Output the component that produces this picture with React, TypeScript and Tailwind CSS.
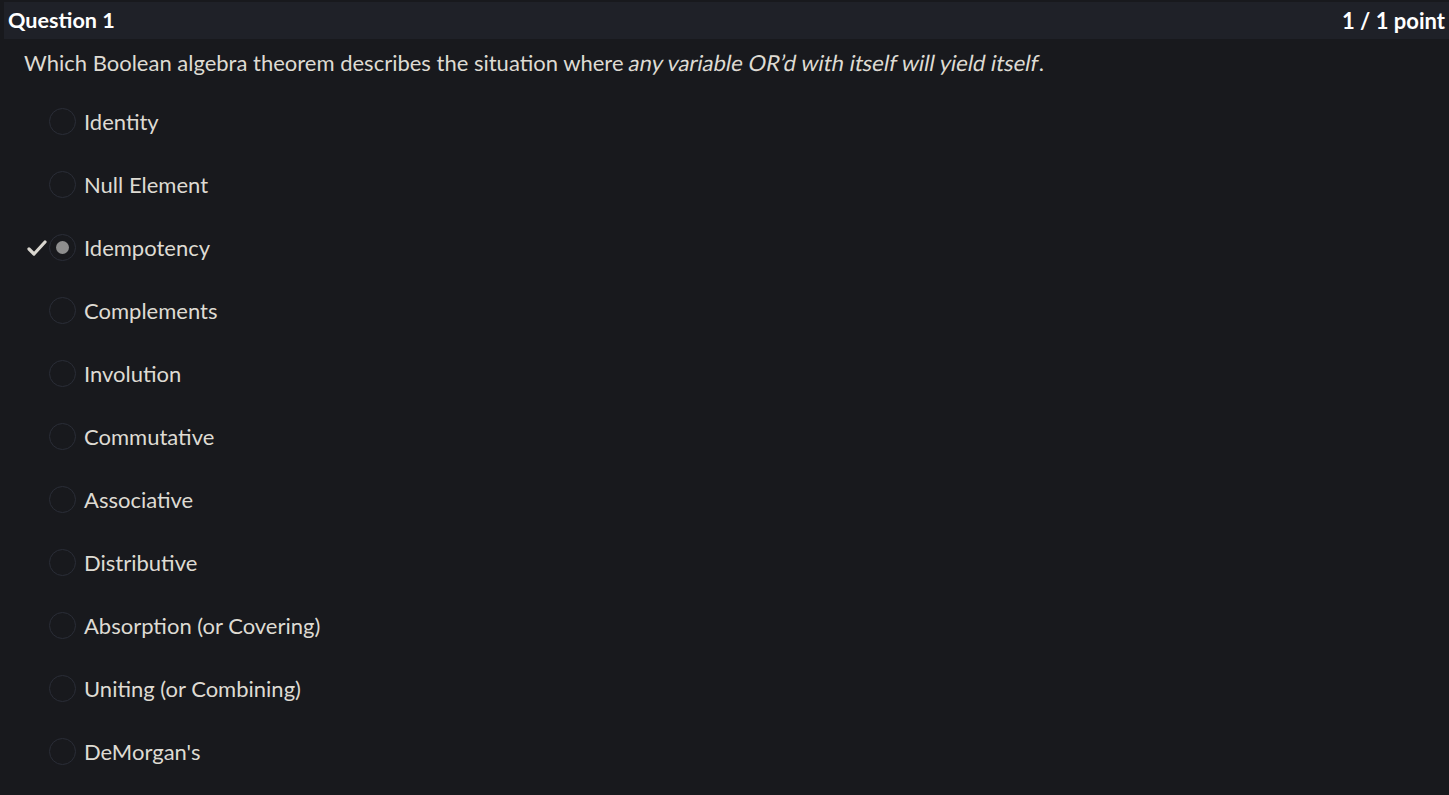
import React from "react";

const options = [
  "Identity",
  "Null Element",
  "Idempotency",
  "Complements",
  "Involution",
  "Commutative",
  "Associative",
  "Distributive",
  "Absorption (or Covering)",
  "Uniting (or Combining)",
  "DeMorgan's",
];

export default function App() {
  return (
    <div
      className="min-h-[795px] w-full bg-[#18191d] pt-[2px] text-[#dedbd3]"
      style={{ fontFamily: "Lato, 'Noto Sans', sans-serif" }}
    >
      <div className="ml-[4px] flex h-[37px] items-center justify-between bg-[#1f2128] pl-[4px] pr-[4px]">
        <span className="text-[21.6px] font-bold text-white">Question 1</span>
        <span className="text-[22px] font-bold text-white">1 / 1 point</span>
      </div>
      <div className="pl-[24px] pt-[10px] text-[22px] leading-[28px]">
        Which Boolean algebra theorem describes the situation where{" "}
        <span className="inline-block skew-x-[-11deg]">any variable OR’d with itself will yield itself</span>.
      </div>
      <div className="pt-[13px]">
        {options.map((o) => {
          const sel = o === "Idempotency";
          return (
            <div key={o} className="flex h-[63px] items-center">
              <div className="flex w-[49px] justify-end pr-[2px]">
                {sel && (
                  <svg width="20" height="16" viewBox="0 0 20 16" className="mt-[1px]">
                    <path
                      d="M2 9 L7 14 L18 2"
                      fill="none"
                      stroke="#d9d6cf"
                      strokeWidth="3.2"
                      strokeLinecap="round"
                      strokeLinejoin="round"
                    />
                  </svg>
                )}
              </div>
              <div className="flex h-[27px] w-[27px] items-center justify-center rounded-full border border-[#2a2d37]">
                {sel && <div className="h-[13px] w-[13px] rounded-full bg-[#8e8e8e]" />}
              </div>
              <span className="ml-[8px] text-[22px]">{o}</span>
            </div>
          );
        })}
      </div>
    </div>
  );
}
